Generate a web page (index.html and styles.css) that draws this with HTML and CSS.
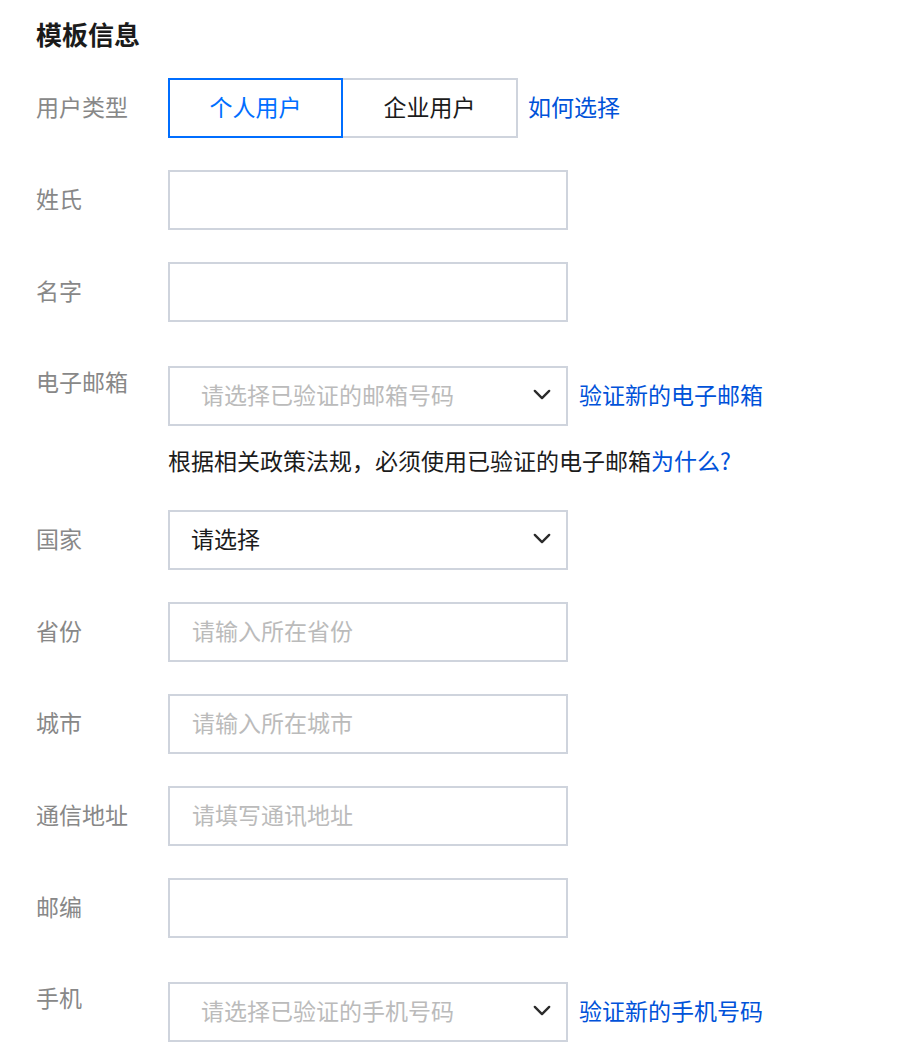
FILE: index.html
```html
<!DOCTYPE html>
<html lang="zh-CN">
<head>
<meta charset="utf-8">
<title>模板信息</title>
<link rel="stylesheet" href="styles.css">
</head>
<body>
<div class="page">
  <h1 class="title">模板信息</h1>
  <div class="form">
    <div class="row row-first">
      <div class="label">用户类型</div>
      <div class="segment">
        <div class="seg seg-active">个人用户</div>
        <div class="seg">企业用户</div>
      </div>
      <a class="link link-seg" href="#">如何选择</a>
    </div>

    <div class="row">
      <div class="label">姓氏</div>
      <input class="field" type="text">
    </div>

    <div class="row">
      <div class="label">名字</div>
      <input class="field" type="text">
    </div>

    <div class="row row-top row-spaced">
      <div class="label label-top">电子邮箱</div>
      <div class="col">
        <div class="inline">
          <div class="select select-wide">
            <span class="placeholder">请选择已验证的邮箱号码</span>
            <svg class="chev" viewBox="0 0 20 12" width="18" height="11"><path d="M2 2 L10 10 L18 2" fill="none" stroke="#2b2b2b" stroke-width="2.6" stroke-linecap="round" stroke-linejoin="round"/></svg>
          </div>
          <a class="link link-side" href="#">验证新的电子邮箱</a>
        </div>
        <p class="help">根据相关政策法规，必须使用已验证的电子邮箱<a class="link" href="#">为什么?</a></p>
      </div>
    </div>

    <div class="row row-after-help">
      <div class="label">国家</div>
      <div class="select">
        <span class="value">请选择</span>
        <svg class="chev" viewBox="0 0 20 12" width="18" height="11"><path d="M2 2 L10 10 L18 2" fill="none" stroke="#2b2b2b" stroke-width="2.6" stroke-linecap="round" stroke-linejoin="round"/></svg>
      </div>
    </div>

    <div class="row">
      <div class="label">省份</div>
      <input class="field" type="text" placeholder="请输入所在省份">
    </div>

    <div class="row">
      <div class="label">城市</div>
      <input class="field" type="text" placeholder="请输入所在城市">
    </div>

    <div class="row">
      <div class="label">通信地址</div>
      <input class="field" type="text" placeholder="请填写通讯地址">
    </div>

    <div class="row">
      <div class="label">邮编</div>
      <input class="field" type="text">
    </div>

    <div class="row row-top row-spaced">
      <div class="label label-top">手机</div>
      <div class="inline">
        <div class="select select-wide">
          <span class="placeholder">请选择已验证的手机号码</span>
          <svg class="chev" viewBox="0 0 20 12" width="18" height="11"><path d="M2 2 L10 10 L18 2" fill="none" stroke="#2b2b2b" stroke-width="2.6" stroke-linecap="round" stroke-linejoin="round"/></svg>
        </div>
        <a class="link link-side" href="#">验证新的手机号码</a>
      </div>
    </div>
  </div>
</div>
</body>
</html>
```

FILE: styles.css
```css
html, body {
  margin: 0;
  padding: 0;
  background: #ffffff;
}

body {
  font-family: "Noto Sans CJK SC", "Noto Sans", sans-serif;
  font-size: 23px;
  color: #1b1b1b;
}

.page {
  padding: 16px 0 0 36px;
}

.title {
  margin: 0;
  font-size: 26px;
  line-height: 36px;
  font-weight: 700;
  color: #1b1b1b;
}

.form {
  display: flex;
  flex-direction: column;
}

.row {
  display: flex;
  align-items: center;
  margin-top: 32px;
}

.row-first {
  margin-top: 26px;
}

.row-top {
  align-items: flex-start;
}

.row-spaced {
  margin-top: 44px;
}

.row-after-help {
  margin-top: 32px;
}

.label {
  flex: none;
  width: 132px;
  color: #888888;
  line-height: 32px;
  padding-bottom: 4px;
}

.label-top {
  line-height: 30px;
  padding-bottom: 0;
}

.segment {
  display: flex;
  height: 60px;
}

.seg {
  box-sizing: border-box;
  width: 175px;
  height: 60px;
  display: flex;
  align-items: center;
  justify-content: center;
  border: 2px solid #cfd4dd;
  padding-bottom: 4px;
  color: #1b1b1b;
}

.seg + .seg {
  border-left: none;
}

.seg-active {
  border-color: #006eff;
  color: #006eff;
}

.link {
  color: #0052d9;
  text-decoration: none;
}

.link-seg {
  margin-left: 10px;
  padding-bottom: 4px;
}

.link-side {
  margin-left: 11px;
  padding-bottom: 4px;
}

.field {
  box-sizing: border-box;
  width: 400px;
  height: 60px;
  margin: 0;
  padding: 0 0 4px 22px;
  border: 2px solid #cfd4dd;
  border-radius: 0;
  outline: none;
  font-family: inherit;
  font-size: 23px;
  color: #1b1b1b;
  background: #fff;
}

.field::placeholder {
  color: #bbbbbb;
}

.select {
  box-sizing: border-box;
  width: 400px;
  height: 60px;
  border: 2px solid #cfd4dd;
  display: flex;
  align-items: center;
  justify-content: space-between;
  padding: 0 15px 4px 21px;
}

.select-wide {
  padding-left: 31px;
}

.placeholder {
  color: #bbbbbb;
}

.value {
  color: #1b1b1b;
}

.chev {
  flex: none;
  display: block;
}

.col {
  display: flex;
  flex-direction: column;
}

.inline {
  display: flex;
  align-items: center;
}

.help {
  margin: 18px 0 0;
  line-height: 32px;
  color: #1b1b1b;
}

.row-after-help {
  margin-top: 34px;
}
```
